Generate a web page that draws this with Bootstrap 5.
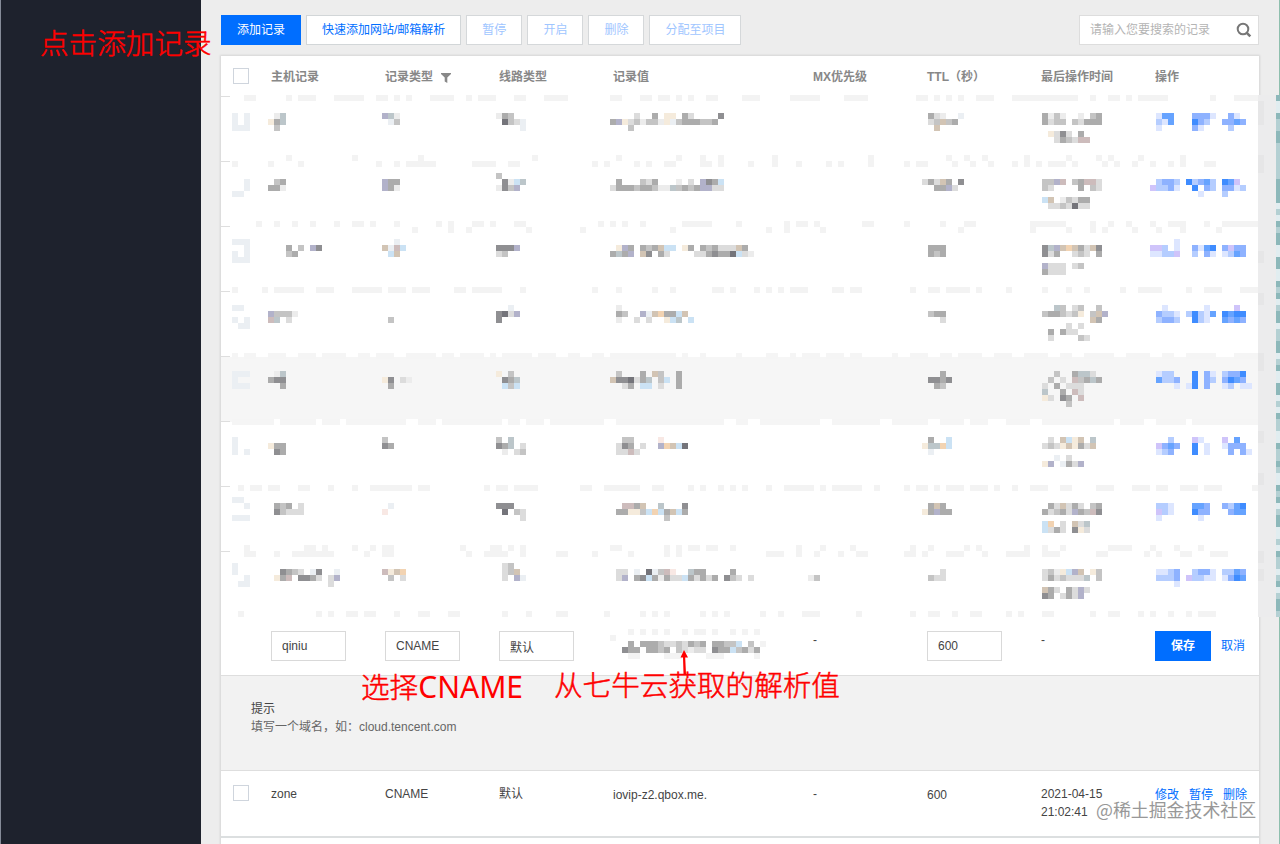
<!DOCTYPE html>
<html lang="zh-CN">
<head>
<meta charset="utf-8">
<meta name="viewport" content="width=device-width, initial-scale=1">
<title>记录管理</title>
<link href="https://cdn.jsdelivr.net/npm/bootstrap@5.3.0/dist/css/bootstrap.min.css" rel="stylesheet">
<style>
body{font:12px/18px "Liberation Sans","Noto Sans CJK SC",sans-serif;color:#444;background:#ededed;width:1280px;height:844px;overflow:hidden}
.side{width:201px;background:#1e222d;border-left:1px solid #858b98}
.work{padding:15px 20px 0;width:1079px;border-right:1px solid #8fbfae}
.btn,.form-control{font-size:12px;line-height:18px;height:30px;border-radius:0;padding:5px 15px}
.btn-primary{--bs-btn-bg:#006eff;--bs-btn-border-color:#006eff}
.btn-plain{background:#fff;border:1px solid #d2d6d8;color:#006eff}
.btn-plain:disabled{background:#fff;border-color:#d5d8da;color:#9fc6ff;opacity:1}
.tools{gap:5px;height:30px}
.find{width:180px;height:30px;background:#fff;border:1px solid #ddd;padding:0 6px 0 10px;color:#b4b4b4}
.panel{width:1038px;margin-top:11px;background:#fff;box-shadow:0 0 2px 1px rgba(0,0,0,.1);height:790px}
.line{display:grid;grid-template-columns:50px 114px 114px 114px 200px 114px 114px 114px 104px;position:relative;align-items:start}
.line>div{min-width:0}
.head-line{height:41px;padding-top:12px;font-weight:bold;color:#888}
.tick{width:16px;height:16px;border:1px solid #cfd5dd;background:#fff;margin-left:12px}
.masked{height:65px}
.masked::before{content:"";position:absolute;left:0;top:-1px;width:9px;height:1px;background:#dedede}
.masked.over{background:#f6f6f6}
.strip{position:absolute;left:11px;top:-7px;display:block;pointer-events:none;z-index:1}
.masked svg,.mosaic{display:block;overflow:visible}
.edit-line{height:58px;padding-top:14px}
.edit-line .form-control{width:75px;padding:5px 10px;border-color:#d9d9d9;color:#444}
.value-mask{margin:-2px 0 0 -3px}
.cancel{margin-left:10px;margin-right:-10px}
.tip-line{height:96px;background:#f2f2f2;border-top:1px solid #dedede;border-bottom:1px solid #dedede;padding:24px 30px;color:#666}
.tip-line .title{color:#444}
.rec-line{height:67px;padding-top:14px;border-bottom:2px solid #dcdfe0}
.actions{gap:10px}
.lnk{color:#006eff;text-decoration:none}
.note{position:absolute;color:#f00;font:300 28.6px/40px "Noto Sans CJK SC",sans-serif;-webkit-text-stroke:.5px #f00;white-space:nowrap;z-index:5}
.note .latin{font-family:"Noto Sans",sans-serif;font-size:30px;font-weight:400;line-height:1;-webkit-text-stroke:0}
.mark-text{position:absolute;left:1096px;top:796px;font:17.9px/26px "Noto Sans CJK SC",sans-serif;color:#8d8d8d;opacity:.9;text-shadow:0 0 1px #fff;white-space:nowrap;z-index:5}
.edge{position:absolute;left:1258px;top:95px;z-index:3}
</style>
</head>
<body class="position-relative d-flex">
<aside class="side flex-shrink-0"></aside>
<main class="work flex-shrink-0">
  <div class="tools d-flex">
    <button class="btn btn-primary">添加记录</button>
    <button class="btn btn-plain">快速添加网站/邮箱解析</button>
    <button class="btn btn-plain" disabled>暂停</button>
    <button class="btn btn-plain" disabled>开启</button>
    <button class="btn btn-plain" disabled>删除</button>
    <button class="btn btn-plain" disabled>分配至项目</button>
    <div class="find d-flex align-items-center justify-content-between ms-auto"><span>请输入您要搜索的记录</span>
      <svg width="16" height="16" viewBox="0 0 16 16" fill="none" stroke="#777" stroke-width="2"><circle cx="7" cy="7" r="5.3"/><path d="M10.8 10.8 14.3 14.3" stroke-width="2.6"/></svg></div>
  </div>
  <section class="panel">
    <div class="line head-line">
      <div><div class="tick"></div></div><div>主机记录</div>
      <div>记录类型<svg class="ms-2" width="10" height="10" viewBox="0 0 10 10" fill="#888"><path d="M0 0H10V1L6.3 4.5V10L3.7 8.5V4.5L0 1Z"/></svg></div>
      <div>线路类型</div><div>记录值</div><div>MX优先级</div><div>TTL（秒）</div><div>最后操作时间</div><div>操作</div>
    </div>
    <div id="maskedRows"></div>
    <div class="line edit-line">
      <svg id="lastStrip" class="strip"></svg>
      <div></div>
      <div><input class="form-control" value="qiniu"></div>
      <div><input class="form-control" value="CNAME"></div>
      <div><input class="form-control" value="默认"></div>
      <div id="valueMask" class="value-mask"></div>
      <div>-</div>
      <div><input class="form-control" value="600"></div>
      <div>-</div>
      <div class="d-flex align-items-center"><button class="btn btn-primary fw-bold">保存</button><a class="lnk cancel" href="#">取消</a></div>
    </div>
    <div class="tip-line"><div class="title">提示</div><div>填写一个域名，如：cloud.tencent.com</div></div>
    <div class="line rec-line">
      <div><div class="tick"></div></div><div>zone</div><div>CNAME</div><div>默认</div><div style="padding-top:1px">iovip-z2.qbox.me.</div><div>-</div><div style="padding-top:1px">600</div><div>2021-04-15<br>21:02:41</div>
      <div class="actions d-flex" style="padding-top:1px"><a class="lnk" href="#">修改</a><a class="lnk" href="#">暂停</a><a class="lnk" href="#">删除</a></div>
    </div>
  </section>
</main>
<svg class="edge" id="edge" width="22" height="522"></svg>
<div class="note" style="left:40px;top:22px">点击添加记录</div>
<div class="note" style="left:361px;top:666px">选择<span class="latin">CNAME</span></div>
<div class="note" style="left:554px;top:664px">从七牛云获取的解析值</div>
<svg class="position-absolute" style="left:678px;top:649px;z-index:6" width="14" height="26"><path d="M6 1 2.5 8.5H5L5.5 25H8L7.2 8.5H10Z" fill="#f00"/></svg>
<div class="mark-text">@稀土掘金技术社区</div>
<script src="https://cdn.jsdelivr.net/npm/bootstrap@5.3.0/dist/js/bootstrap.bundle.min.js"></script>
<script>
// Blocks used to hide private record data: one letter per 6px block, "|" starts a new line
const tone={a:'#ececec',b:'#dcdcdc',c:'#c4c4c4',d:'#acacac',e:'#8f8f92',f:'#74747a',k:'#ebeff3',n:'#bcc6ca',s:'#cbe2f4',v:'#b2b2ca',r:'#cdbcbc',t:'#d2c4b4',y:'#f5ebdc',o:'#f2d3b2',p:'#f8e8e4',
 1:'#dde6ff',2:'#b5cdff',3:'#8eb2ff',4:'#66a3ff',5:'#3f8cff',L:'#cfc4fa',g:'#f3f3f3',h:'#ececec',w:'#ffffff'};
const blocks=code=>code.split('|').map((r,y)=>[...r].map((c,x)=>tone[c]?`<rect x="${x*6}" y="${y*6}" width="6" height="6" fill="${tone[c]}"/>`:'').join('')).join('');
const mosaic=(code,dx)=>`<svg class="mosaic" width="10" height="40" style="margin-left:${dx}px" shape-rendering="crispEdges">${blocks(code)}</svg>`;
const runs=(list,y,fill)=>list.trim().split(/\s+/).filter(Boolean).map(p=>{const[a,n=1]=p.split('+').map(Number);return `<rect x="${a*6}" y="${y}" width="${n*6}" height="6" fill="${fill}"/>`}).join('');
// each record: top gap, then checkbox, host, type, line, value, mx, ttl, time, actions
const shift=[11,-3,-3,-3,-3,-5,-5,1,-5];
const rows=[
[10,'|k.k|k.k|kkk','|.an|ydn|.c','|vna|.kc','|adc|.fcbk|....k','|....b..d.yy.db....e|dvybcaccaykcdddccd|...c','','|.dba..k|.bctcd|..t','|daca..a.cd|dbcc.cbddd||.ybeb.d|..bdcbrr','|.144...3331..31|.214...532..3343|.1.....31....2'],
[11,'|..k|..k|kk','|.cd|dda','|vdd|vda','c|.easn|aecv','|.d...cbd...a.b.veds|bdddcddcaancdcdvvbb','','|bdbtd.e|..ddvb','|ccvr.cdrrb|cb....d.cb||st.acbdd|.bbcbfbb','|.2332.52342.54L|L2231..5.32.3312|........1...2'],
[12,'kkk|..k|k.k|kkk','|...d.c.ve|...cd','..k|tkrs|.st','|eeev|bc','|.yvd.dcdtss.yd.dcdbbbtd|dndv.te.db....bbdeddfsba','','|.ddd|.dcd','|envtotdbte|ebd..bcb.d||vbbb.bc|dbbb','....1|LL2.1..3145.3L33|1122L..2.31.1243'],
[13,'kk||k.k|.kk','|vccca|rn.b','||.c','..k|efbv|e','.a|.dc..vktoddst|.a..b.b..ysn.s','','|.cdd|...b','..nc.bc..c|cddcbcy.ctv|........td|....b.b|.d.dbb|.b....cb','..1......1....L|.3221.25214.5455|.2332..521..4343'],
[14,'kkk|k|kkk','.an|dee|..d','|ye.ba|.d','y.c|.edn|.scs','.c...d.tc..d|teefbdn.cs.d|..bd.ss.b..d','','...d|.eede|..dc','..c..dnnb|.c.b.rcdnd|b.d.bbb|n..d.rb|yb.ed.r|....c','.122...5.31.2335|.4223..5.32.3543|....1.15.3..12.11'],
[15,'k|k|k.k','|ydd|.ed','c|ed','c.n|edn.b|.a.bc','..cc....p|.bed.b..votsf|.bbrb','','.d..s|ynnos|.k','.b.tsyt.n|bcbytydbt||..k.b|yv.kdbv','...2...L1...L.4|.L343..5.1..1333|.123...5.1...3.31'],
[10,'kk|..k||kkk','|.dcd.b|.ecbbb','|.k|p','|eee|.f.cb|....b','|..rrdt..n...e|.ddyycsosdtsd|.........c','','|.dtd|ydvdd','|.dbtbdb.cd|dbcdbvdcre||so.b.tbn|sbdb.eyb','|.221...443..3245|.L21...533...344|.1......1'],
[11,'k|k|..k|.kk','|..edcb.ke..k|.ydr.eedb.bv|..........b','|ryto|.c.b','.bc|.bct|.b.vk','|.bb.k.fkcrp..ndd....d|.bv.desdadbbsdbdbd.ecb.b','||ac','|...b|.cbb','|bcaysvt.yc|bdbcbbbn.c||tdb.dbvb|ed.bdbv','|.1123..2331.2243|.2223.L2211.1354|....1']
];
// [offset of first line, first line runs, second line runs]
const strips=[
[-2,'2+2 9 11+3 17+5 24+2 27 29 33+4 39 41+3 47+2 52+4 63+2 68+2 71+2 74 76 79+2 85+3 93+5 102+4 114+2 117 119 121 124+3 130+8 138+3 143 146+2 149 151+5 163 167+4',''],
[-7,'9 20 31 50 64 74 78 81 90 106 119 122 125 132 139 144 146 151 158','0 6 11 24 27 29+5 40+4 46+2 60 62 67 69 72+2 78+2 81 86 90 94 99 101 106 112 114+2 120 123 126 130 132 134 136+3 140 145 147 150 153 156 158 162+2'],
[-6,'4 7 10 13 17 20+2 23 27 34 36 40+2 43 47+2 61 63 65 68 75+5 84 92 94+2 97 105+2 112 118 122+2 133+6 143 146 149 153 156+3 162 165+6','30 36 39 49 58 73 89 92 98 121 133 139 143 145 150 154 158 164'],
[-5,'0 5 7+5 14+3 20+5 26+3 30+3 37+2 40+5 48 60 64 70 73 80+2 83 87 89 91 93+3 100+2 103+2 113 116+2 119+4 124 129 135 139 142 148 151+4 159 162+3 168+4',''],
[-4,'0 2+2 6+3 11+3 15+4 21+2 24+3 29+5 35+2 38+4 43 45+5 51+3 56+2 60+2 63+11 75 78 84 89+2 93 95+3 99+3 103+2 110 113+3 118+2 121+4 127+3 132+4 138+2 142+5 149+4 155+2 159+5 167+4',''],
[-3,'0+7 8+6 15+3 19+10 31+3 35+10 46+2 49+3 53+9 64+18 84+2 88+10 100+8 110+6 118+4 123+3 129+4 135+12 148+4 154+5 160+11',''],
[-2,'1 3+2 6+2 11+2 16 20 23+7 31+2 42 44+2 47+4 58+2 62+6 70+2 76 78 81 83 85 89 92+5 98 100+5 107 112 114+2 117 119+3 123+3 127 130 133+3 138+2 144+3 150+3 154+2 158+3 162+3 170',''],
[-7,'2 12+2 15 20 23 25+2 38 43+2 46 48 63+2 72 74 76+2 79+2 83 94 98 103 113 116 122 124 132 135 138 146+4 153 157 161','2+2 7 10+4 14+3 22 25+2 39 42+4 48 54+2 60 66 72 74 89+3 94 97 101 104+2 112+2 115 119+3 125 129+4 135+3 144+2 152 154 158+2 163+3']
];
// rows are 65px high, so the strips drift by a pixel to stay on the 6px block grid
document.getElementById('maskedRows').innerHTML=rows.map((r,i)=>{
 const s=strips[i],f='#f3f3f3';
 const art=(i===5?`<rect y="0" width="1026" height="6" fill="#fff"/>`:'')+runs(s[1],0,i===4||i===5?'#f5f5f5':f)+runs(s[2],6,f);
 return `<div class="line masked${i===4?' over':''}"><svg class="strip" style="top:${s[0]}px" width="1030" height="12" shape-rendering="crispEdges">${art}</svg>`+
 r.slice(1).map((c,k)=>`<div style="padding-top:${r[0]}px">${mosaic(c,shift[k])}</div>`).join('')+`</div>`}).join('');
const last=document.getElementById('lastStrip');
last.setAttribute('width',1030);last.setAttribute('height',6);last.style.top='-6px';
last.innerHTML=runs('1 14 16 19+2 22+2 27 31+2 36+2 45 49 54+2 62 68 70 72 78 80 82 88 91 95+3 104 113 116+2 120 123+2 129 131 135+2 143 146+2 151 153 156 159 161+3',0,'#f3f3f3');
document.getElementById('valueMask').innerHTML=mosaic('...g.g.g.g..g.gg.g..g.g.g|g|...d.dddcbbcbdcd.ddccs.c.g|..edd.ddcd.cbabb.eddscdbd|...gg....ggg....ggg.....g',0);
const teal='dlldmmddmmmmmmddddlmldmddllddlldmdlmddlmmddlmdllddlmldmmlldmmdmlldmdlmddllmldmmlmdlmddm';
const tc={d:'#8db8ba',m:'#b4d0d3',l:'#e1edf0'};
document.getElementById('edge').innerHTML='<rect width="18" height="522" fill="#ececed"/>'+[...teal].map((c,i)=>`<rect x="18" y="${i*6}" width="4" height="6" fill="${tc[c]}"/>`).join('')+[1,3,10,11,26,33,43,44,56,63,76,79].map(i=>`<rect x="0" y="${i*6}" width="6" height="12" fill="#e6e6e7"/>`).join('');
</script>
</body>
</html>
